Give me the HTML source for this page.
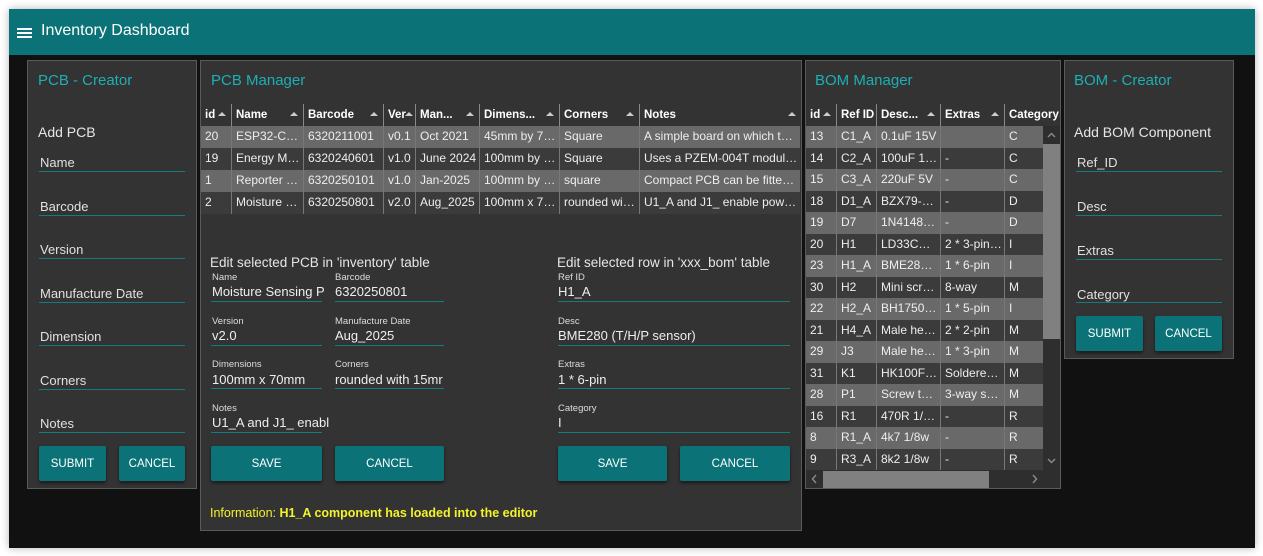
<!DOCTYPE html>
<html><head><meta charset="utf-8"><style>
*{box-sizing:border-box;margin:0;padding:0}
body{width:1263px;height:556px;background:#fff;font-family:"Liberation Sans",sans-serif;position:relative;overflow:hidden;color:#e6e6e6}
.a{position:absolute}
.app{left:9px;top:9px;width:1246px;height:539px;background:#111;box-shadow:0 0 8px rgba(0,0,0,.3)}
.hdr{left:9px;top:9px;width:1246px;height:46px;background:#0b7377;color:#fff;font-size:16px}
.pan{background:#333;border:1px solid #5a5a5a}
.tt{color:#1bb0b5;font-size:15px}
.lbl{font-size:13px;color:#e0e0e0}
.ln{height:1px;background:#147b80}
.btn{background:#0b7377;color:#fff;font-size:11.5px;display:flex;align-items:center;justify-content:center;box-shadow:0 2px 3px rgba(0,0,0,.5);border-radius:2px}
.th{font-size:11.5px;font-weight:bold;color:#fff;display:flex;align-items:center;padding-left:4px;border-right:1px solid #888;height:22px;white-space:nowrap;overflow:hidden;position:absolute;top:104px}
.ar{position:absolute;right:5px;top:8px;width:0;height:0;border-left:4px solid transparent;border-right:4px solid transparent;border-bottom:4px solid #ccc}
.row{position:absolute;display:flex;font-size:12px;color:#eee}
.row div{border-right:1px solid #777;padding-left:4px;padding-right:2px;white-space:nowrap;overflow:hidden;text-overflow:ellipsis;line-height:21.5px;height:100%}
.L{background:#696969}.D{background:#3b3b3b}
.sl{font-size:9.5px;color:#ddd}
.sv{font-size:13px;color:#eee}
</style></head><body>
<div class="a app"></div>
<div class="a hdr"><div class="a" style="left:8px;top:19px;width:15px;height:2px;background:#fff;box-shadow:0 4px 0 #fff,0 8px 0 #fff"></div><div class="a" style="left:32px;top:13px">Inventory Dashboard</div></div>

<!-- PCB creator -->
<div class="a pan" style="left:27px;top:60px;width:170px;height:429px"></div>
<div class="a tt" style="left:38px;top:72px">PCB - Creator</div>
<div class="a" style="left:38px;top:124px;font-size:14px">Add PCB</div>
<div class="a lbl" style="left:40px;top:155px">Name</div><div class="a ln" style="left:39px;top:171px;width:146px"></div>
<div class="a lbl" style="left:40px;top:199px">Barcode</div><div class="a ln" style="left:39px;top:215px;width:146px"></div>
<div class="a lbl" style="left:40px;top:242px">Version</div><div class="a ln" style="left:39px;top:258px;width:146px"></div>
<div class="a lbl" style="left:40px;top:286px">Manufacture Date</div><div class="a ln" style="left:39px;top:302px;width:146px"></div>
<div class="a lbl" style="left:40px;top:329px">Dimension</div><div class="a ln" style="left:39px;top:345px;width:146px"></div>
<div class="a lbl" style="left:40px;top:373px">Corners</div><div class="a ln" style="left:39px;top:389px;width:146px"></div>
<div class="a lbl" style="left:40px;top:416px">Notes</div><div class="a ln" style="left:39px;top:432px;width:146px"></div>
<div class="a btn" style="left:39px;top:446px;width:67px;height:35px">SUBMIT</div>
<div class="a btn" style="left:119px;top:446px;width:66px;height:35px">CANCEL</div>

<!-- PCB Manager -->
<div class="a pan" style="left:200px;top:60px;width:602px;height:471px"></div>
<div class="a tt" style="left:211px;top:72px">PCB Manager</div>
<div class="th" style="left:201px;width:31px">id<span class="ar"></span></div>
<div class="th" style="left:232px;width:72px">Name<span class="ar"></span></div>
<div class="th" style="left:304px;width:80px">Barcode<span class="ar"></span></div>
<div class="th" style="left:384px;width:32px">Ver<span class="ar" style="right:2px"></span></div>
<div class="th" style="left:416px;width:64px">Man...<span class="ar"></span></div>
<div class="th" style="left:480px;width:80px">Dimens...<span class="ar"></span></div>
<div class="th" style="left:560px;width:80px">Corners<span class="ar"></span></div>
<div class="th" style="left:640px;width:161px;border-right:none">Notes<span class="ar"></span></div>
<div class="row L" style="left:201px;top:126px;height:22px"><div style="width:31px">20</div><div style="width:72px">ESP32-CAM</div><div style="width:80px">6320211001</div><div style="width:32px">v0.1</div><div style="width:64px">Oct 2021</div><div style="width:80px">45mm by 70mm</div><div style="width:80px">Square</div><div style="width:160px;border:none">A simple board on which to mount</div></div>
<div class="row D" style="left:201px;top:148px;height:22px"><div style="width:31px">19</div><div style="width:72px">Energy Monitor</div><div style="width:80px">6320240601</div><div style="width:32px">v1.0</div><div style="width:64px">June 2024</div><div style="width:80px">100mm by 70mm</div><div style="width:80px">Square</div><div style="width:160px;border:none">Uses a PZEM-004T module and</div></div>
<div class="row L" style="left:201px;top:170px;height:22px"><div style="width:31px">1</div><div style="width:72px">Reporter Node</div><div style="width:80px">6320250101</div><div style="width:32px">v1.0</div><div style="width:64px">Jan-2025</div><div style="width:80px">100mm by 40mm</div><div style="width:80px">square</div><div style="width:160px;border:none">Compact PCB can be fitted within</div></div>
<div class="row D" style="left:201px;top:192px;height:22px"><div style="width:31px">2</div><div style="width:72px">Moisture Sensing</div><div style="width:80px">6320250801</div><div style="width:32px">v2.0</div><div style="width:64px">Aug_2025</div><div style="width:80px">100mm x 70mm</div><div style="width:80px">rounded with 15mm</div><div style="width:160px;border:none">U1_A and J1_ enable power to the</div></div>

<div class="a" style="left:210px;top:255px;font-size:13.5px">Edit selected PCB in 'inventory' table</div>
<div class="a" style="left:557px;top:255px;font-size:13.5px">Edit selected row in 'xxx_bom' table</div>

<div class="a sl" style="left:212px;top:272px">Name</div><div class="a sv" style="left:212px;top:284px">Moisture Sensing P</div><div class="a ln" style="left:211px;top:301px;width:111px"></div>
<div class="a sl" style="left:335px;top:272px">Barcode</div><div class="a sv" style="left:335px;top:284px">6320250801</div><div class="a ln" style="left:335px;top:301px;width:109px"></div>
<div class="a sl" style="left:212px;top:316px">Version</div><div class="a sv" style="left:212px;top:328px">v2.0</div><div class="a ln" style="left:211px;top:345px;width:111px"></div>
<div class="a sl" style="left:335px;top:316px">Manufacture Date</div><div class="a sv" style="left:335px;top:328px">Aug_2025</div><div class="a ln" style="left:335px;top:345px;width:109px"></div>
<div class="a sl" style="left:212px;top:359px">Dimensions</div><div class="a sv" style="left:212px;top:372px">100mm x 70mm</div><div class="a ln" style="left:211px;top:388px;width:111px"></div>
<div class="a sl" style="left:335px;top:359px">Corners</div><div class="a sv" style="left:335px;top:372px">rounded with 15mr</div><div class="a ln" style="left:335px;top:388px;width:109px"></div>
<div class="a sl" style="left:212px;top:403px">Notes</div><div class="a sv" style="left:212px;top:415px">U1_A and J1_ enabl</div><div class="a ln" style="left:211px;top:432px;width:111px"></div>

<div class="a sl" style="left:558px;top:272px">Ref ID</div><div class="a sv" style="left:558px;top:284px">H1_A</div><div class="a ln" style="left:558px;top:301px;width:232px"></div>
<div class="a sl" style="left:558px;top:316px">Desc</div><div class="a sv" style="left:558px;top:328px">BME280 (T/H/P sensor)</div><div class="a ln" style="left:558px;top:345px;width:232px"></div>
<div class="a sl" style="left:558px;top:359px">Extras</div><div class="a sv" style="left:558px;top:372px">1 * 6-pin</div><div class="a ln" style="left:558px;top:388px;width:232px"></div>
<div class="a sl" style="left:558px;top:403px">Category</div><div class="a sv" style="left:558px;top:415px">I</div><div class="a ln" style="left:558px;top:432px;width:232px"></div>

<div class="a btn" style="left:211px;top:446px;width:111px;height:35px">SAVE</div>
<div class="a btn" style="left:335px;top:446px;width:109px;height:35px">CANCEL</div>
<div class="a btn" style="left:558px;top:446px;width:109px;height:35px">SAVE</div>
<div class="a btn" style="left:680px;top:446px;width:110px;height:35px">CANCEL</div>
<div class="a" style="left:210px;top:506px;font-size:12.5px;color:#f3f32a">Information: <b>H1_A component has loaded into the editor</b></div>

<!-- BOM Manager -->
<div class="a pan" style="left:805px;top:60px;width:256px;height:429px"></div>
<div class="a tt" style="left:815px;top:72px">BOM Manager</div>
<div class="th" style="left:806px;width:31px">id<span class="ar"></span></div>
<div class="th" style="left:837px;width:40px">Ref ID</div>
<div class="th" style="left:877px;width:64px">Desc...<span class="ar"></span></div>
<div class="th" style="left:941px;width:64px">Extras<span class="ar"></span></div>
<div class="th" style="left:1005px;width:55px;border-right:none">Category</div>
<div class="a" style="left:806px;top:126px;width:237px">
<div class="row L" style="position:relative;height:21.5px"><div style="width:31px">13</div><div style="width:40px">C1_A</div><div style="width:64px">0.1uF 15V</div><div style="width:64px"></div><div style="width:38px;border:none">C</div></div>
<div class="row D" style="position:relative;height:21.5px"><div style="width:31px">14</div><div style="width:40px">C2_A</div><div style="width:64px">100uF 15V</div><div style="width:64px">-</div><div style="width:38px;border:none">C</div></div>
<div class="row L" style="position:relative;height:21.5px"><div style="width:31px">15</div><div style="width:40px">C3_A</div><div style="width:64px">220uF 5V</div><div style="width:64px">-</div><div style="width:38px;border:none">C</div></div>
<div class="row D" style="position:relative;height:21.5px"><div style="width:31px">18</div><div style="width:40px">D1_A</div><div style="width:64px">BZX79-C3V3</div><div style="width:64px">-</div><div style="width:38px;border:none">D</div></div>
<div class="row L" style="position:relative;height:21.5px"><div style="width:31px">19</div><div style="width:40px">D7</div><div style="width:64px">1N4148 signal</div><div style="width:64px">-</div><div style="width:38px;border:none">D</div></div>
<div class="row D" style="position:relative;height:21.5px"><div style="width:31px">20</div><div style="width:40px">H1</div><div style="width:64px">LD33CV / reg</div><div style="width:64px">2 * 3-pin hdr</div><div style="width:38px;border:none">I</div></div>
<div class="row L" style="position:relative;height:21.5px"><div style="width:31px">23</div><div style="width:40px">H1_A</div><div style="width:64px">BME280 (T/H/P)</div><div style="width:64px">1 * 6-pin</div><div style="width:38px;border:none">I</div></div>
<div class="row D" style="position:relative;height:21.5px"><div style="width:31px">30</div><div style="width:40px">H2</div><div style="width:64px">Mini screw term</div><div style="width:64px">8-way</div><div style="width:38px;border:none">M</div></div>
<div class="row L" style="position:relative;height:21.5px"><div style="width:31px">22</div><div style="width:40px">H2_A</div><div style="width:64px">BH1750 (lux)</div><div style="width:64px">1 * 5-pin</div><div style="width:38px;border:none">I</div></div>
<div class="row D" style="position:relative;height:21.5px"><div style="width:31px">21</div><div style="width:40px">H4_A</div><div style="width:64px">Male header</div><div style="width:64px">2 * 2-pin</div><div style="width:38px;border:none">M</div></div>
<div class="row L" style="position:relative;height:21.5px"><div style="width:31px">29</div><div style="width:40px">J3</div><div style="width:64px">Male header</div><div style="width:64px">1 * 3-pin</div><div style="width:38px;border:none">M</div></div>
<div class="row D" style="position:relative;height:21.5px"><div style="width:31px">31</div><div style="width:40px">K1</div><div style="width:64px">HK100F 3V relay</div><div style="width:64px">Soldered direct</div><div style="width:38px;border:none">M</div></div>
<div class="row L" style="position:relative;height:21.5px"><div style="width:31px">28</div><div style="width:40px">P1</div><div style="width:64px">Screw terminal</div><div style="width:64px">3-way screw</div><div style="width:38px;border:none">M</div></div>
<div class="row D" style="position:relative;height:21.5px"><div style="width:31px">16</div><div style="width:40px">R1</div><div style="width:64px">470R 1/8w</div><div style="width:64px">-</div><div style="width:38px;border:none">R</div></div>
<div class="row L" style="position:relative;height:21.5px"><div style="width:31px">8</div><div style="width:40px">R1_A</div><div style="width:64px">4k7 1/8w</div><div style="width:64px">-</div><div style="width:38px;border:none">R</div></div>
<div class="row D" style="position:relative;height:21.5px"><div style="width:31px">9</div><div style="width:40px">R3_A</div><div style="width:64px">8k2 1/8w</div><div style="width:64px">-</div><div style="width:38px;border:none">R</div></div>
</div>
<!-- v scrollbar -->
<div class="a" style="left:1043px;top:126px;width:17px;height:344px;background:#2e2e2e"></div>
<div class="a" style="left:1043px;top:144px;width:17px;height:195px;background:#808080"></div>
<svg class="a" style="left:1043px;top:126px" width="17" height="18"><path d="M5 11 L8.5 7.5 L12 11" stroke="#888" stroke-width="1.5" fill="none"/></svg>
<svg class="a" style="left:1043px;top:452px" width="17" height="18"><path d="M5 7 L8.5 10.5 L12 7" stroke="#888" stroke-width="1.5" fill="none"/></svg>
<!-- h scrollbar -->
<div class="a" style="left:806px;top:470px;width:254px;height:18px;background:#2e2e2e"></div>
<div class="a" style="left:823px;top:471px;width:166px;height:17px;background:#808080"></div>
<svg class="a" style="left:806px;top:470px" width="17" height="18"><path d="M10 5 L6.5 9 L10 13" stroke="#888" stroke-width="1.5" fill="none"/></svg>
<svg class="a" style="left:1026px;top:470px" width="17" height="18"><path d="M7 5 L10.5 9 L7 13" stroke="#888" stroke-width="1.5" fill="none"/></svg>

<!-- BOM creator -->
<div class="a pan" style="left:1064px;top:60px;width:170px;height:299px"></div>
<div class="a tt" style="left:1074px;top:72px">BOM - Creator</div>
<div class="a" style="left:1074px;top:124px;font-size:14px">Add BOM Component</div>
<div class="a lbl" style="left:1077px;top:155px">Ref_ID</div><div class="a ln" style="left:1076px;top:171px;width:146px"></div>
<div class="a lbl" style="left:1077px;top:199px">Desc</div><div class="a ln" style="left:1076px;top:215px;width:146px"></div>
<div class="a lbl" style="left:1077px;top:243px">Extras</div><div class="a ln" style="left:1076px;top:259px;width:146px"></div>
<div class="a lbl" style="left:1077px;top:287px">Category</div><div class="a ln" style="left:1076px;top:302px;width:146px"></div>
<div class="a btn" style="left:1076px;top:316px;width:67px;height:35px">SUBMIT</div>
<div class="a btn" style="left:1155px;top:316px;width:67px;height:35px">CANCEL</div>
</body></html>
